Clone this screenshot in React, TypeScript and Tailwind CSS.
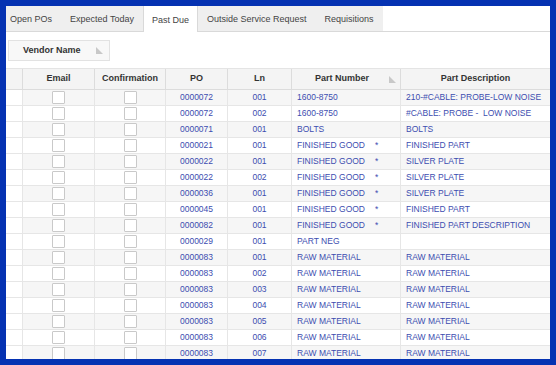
import { Fragment } from 'react';

const tabs = ['Open POs', 'Expected Today', 'Past Due', 'Outside Service Request', 'Requisitions'];

const rows = [
  { po: '0000072', ln: '001', part: '1600-8750', desc: '210-#CABLE: PROBE-LOW NOISE' },
  { po: '0000072', ln: '002', part: '1600-8750', desc: '#CABLE: PROBE -  LOW NOISE' },
  { po: '0000071', ln: '001', part: 'BOLTS', desc: 'BOLTS' },
  { po: '0000021', ln: '001', part: 'FINISHED GOOD', star: true, desc: 'FINISHED PART' },
  { po: '0000022', ln: '001', part: 'FINISHED GOOD', star: true, desc: 'SILVER PLATE' },
  { po: '0000022', ln: '002', part: 'FINISHED GOOD', star: true, desc: 'SILVER PLATE' },
  { po: '0000036', ln: '001', part: 'FINISHED GOOD', star: true, desc: 'SILVER PLATE' },
  { po: '0000045', ln: '001', part: 'FINISHED GOOD', star: true, desc: 'FINISHED PART' },
  { po: '0000082', ln: '001', part: 'FINISHED GOOD', star: true, desc: 'FINISHED PART DESCRIPTION' },
  { po: '0000029', ln: '001', part: 'PART NEG', desc: '' },
  { po: '0000083', ln: '001', part: 'RAW MATERIAL', desc: 'RAW MATERIAL' },
  { po: '0000083', ln: '002', part: 'RAW MATERIAL', desc: 'RAW MATERIAL' },
  { po: '0000083', ln: '003', part: 'RAW MATERIAL', desc: 'RAW MATERIAL' },
  { po: '0000083', ln: '004', part: 'RAW MATERIAL', desc: 'RAW MATERIAL' },
  { po: '0000083', ln: '005', part: 'RAW MATERIAL', desc: 'RAW MATERIAL' },
  { po: '0000083', ln: '006', part: 'RAW MATERIAL', desc: 'RAW MATERIAL' },
  { po: '0000083', ln: '007', part: 'RAW MATERIAL', desc: 'RAW MATERIAL' },
];

const cols = 'grid grid-cols-[17px_72px_71px_62px_64px_109px_149px]';

// little grey sort glyph used by the grid headers
const SortMark = () => (
  <svg width="7" height="7" viewBox="0 0 7 7" className="shrink-0">
    <path d="M0 0 L0 7 L7 7 Z" fill="#c8c8c8" />
  </svg>
);

const Box = () => <div className="w-[13px] h-[13px] border border-[#c9c9c9] bg-white rounded-[1px]" />;

export default function App() {
  return (
    <div className="w-[556px] h-[365px] bg-[#0532b2] p-[6px] font-['Liberation_Sans',Arial,sans-serif]">
      <div className="w-[544px] h-[353px] bg-white overflow-hidden flex flex-col">
        {/* tabs */}
        <div className="flex h-[26px] border-b border-[#d9d9d9] shrink-0">
          {tabs.map((t, i) =>
            t === 'Past Due' ? (
              <div key={t} className="px-[8px] pt-[3px] flex items-center bg-white border-x border-[#d9d9d9] text-[9px] text-[#444] -mb-px">
                {t}
              </div>
            ) : (
              <div
                key={t}
                className={`${i === 0 ? 'pl-[4px]' : 'pl-[9px]'} pr-[9px] pt-[3px] flex items-center bg-[#efefef] text-[9px] text-[#444]`}
              >
                {t}
              </div>
            )
          )}
        </div>

        {/* group panel */}
        <div className="h-[37px] shrink-0 flex items-center pl-[2px] pt-[1px] border-b border-[#e4e4e4]">
          <div className="w-[102px] h-[21px] bg-[#f8f8f8] border border-[#e2e2e2] flex items-center justify-between pl-[14px] pr-[6px]">
            <span className="text-[9px] font-bold text-[#333]">Vendor Name</span>
            <SortMark />
          </div>
        </div>

        {/* header */}
        <div className={`${cols} h-[21px] shrink-0 bg-[#f4f4f4] border-b border-[#dcdcdc] text-[9px] font-bold text-[#333]`}>
          <div className="border-r border-[#dcdcdc]" />
          <div className="border-r border-[#dcdcdc] flex items-center justify-center">Email</div>
          <div className="border-r border-[#dcdcdc] flex items-center justify-center">Confirmation</div>
          <div className="border-r border-[#dcdcdc] flex items-center justify-center">PO</div>
          <div className="border-r border-[#dcdcdc] flex items-center justify-center">Ln</div>
          <div className="border-r border-[#dcdcdc] flex items-center justify-center relative">
            <span className="ml-[-8px]">Part Number</span>
            <div className="absolute right-[4px] top-[7px]">
              <SortMark />
            </div>
          </div>
          <div className="flex items-center justify-center">Part Description</div>
        </div>

        {/* rows */}
        <div className={`${cols} auto-rows-[16px] text-[8.5px] text-[#3c4db0]`}>
          {rows.map((r, i) => {
            const bg = i % 2 === 0 ? 'bg-[#f6f6f6]' : 'bg-white';
            const cell = `${bg} border-r border-b border-[#e6e6e6] flex items-center`;
            return (
              <Fragment key={i}>
                <div className="bg-white border-r border-b border-[#e6e6e6]" />
                <div className={`${cell} justify-center`}>
                  <Box />
                </div>
                <div className={`${cell} justify-center`}>
                  <Box />
                </div>
                <div className={`${cell} justify-center`}>{r.po}</div>
                <div className={`${cell} justify-center`}>{r.ln}</div>
                <div className={`${cell} pl-[5px] whitespace-pre`}>
                  {r.part}
                  {r.star ? <span className="ml-[10px]">*</span> : null}
                </div>
                <div className={`${cell} pl-[5px] whitespace-pre border-r-0`}>{r.desc}</div>
              </Fragment>
            );
          })}
        </div>
      </div>
    </div>
  );
}
